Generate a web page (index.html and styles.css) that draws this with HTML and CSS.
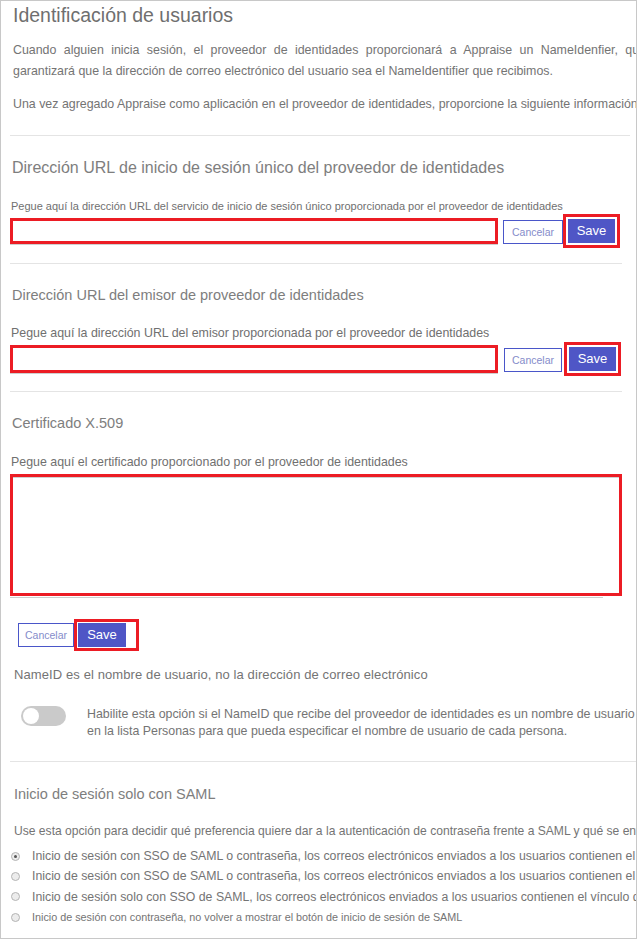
FILE: index.html
```html
<!DOCTYPE html>
<html lang="es">
<head>
<meta charset="utf-8">
<title>Identificación de usuarios</title>
<link rel="stylesheet" href="styles.css">
</head>
<body>
<div class="frame">
  <h1 class="title">Identificación de usuarios</h1>
  <p class="intro"><span class="just">Cuando alguien inicia sesión, el proveedor de identidades proporcionará a Appraise un NameIdenfier, que</span>garantizará que la dirección de correo electrónico del usuario sea el NameIdentifier que recibimos.</p>
  <p class="intro second">Una vez agregado Appraise como aplicación en el proveedor de identidades, proporcione la siguiente información</p>
  <div class="sep sep-wide"></div>

  <h2 class="heading h-first">Dirección URL de inicio de sesión único del proveedor de identidades</h2>
  <div class="label l-first">Pegue aquí la dirección URL del servicio de inicio de sesión único proporcionada por el proveedor de identidades</div>
  <div class="row r-first">
    <div class="input"></div>
    <button class="cancel">Cancelar</button>
    <span class="mark"><button class="save">Save</button></span>
  </div>
  <div class="sep s-second"></div>

  <h2 class="heading h-second">Dirección URL del emisor de proveedor de identidades</h2>
  <div class="label l-second">Pegue aquí la dirección URL del emisor proporcionada por el proveedor de identidades</div>
  <div class="row r-second">
    <div class="input"></div>
    <button class="cancel c-second">Cancelar</button>
    <span class="mark m-second"><button class="save">Save</button></span>
  </div>
  <div class="sep s-third"></div>

  <h2 class="heading h-third">Certificado X.509</h2>
  <div class="label l-third">Pegue aquí el certificado proporcionado por el proveedor de identidades</div>
  <div class="ta-wrap">
    <div class="textarea"></div>
  </div>
  <div class="row r-bottom">
    <button class="cancel c-bottom">Cancelar</button>
    <span class="mark m-bottom"><button class="save">Save</button></span>
  </div>

  <div class="nameid">NameID es el nombre de usuario, no la dirección de correo electrónico</div>
  <div class="toggle-row">
    <span class="toggle"><span class="knob"></span></span>
    <div class="toggle-text">Habilite esta opción si el NameID que recibe del proveedor de identidades es un nombre de usuario<br>en la lista Personas para que pueda especificar el nombre de usuario de cada persona.</div>
  </div>
  <div class="sep sep-full"></div>

  <h2 class="heading h-saml">Inicio de sesión solo con SAML</h2>
  <div class="use">Use esta opción para decidir qué preferencia quiere dar a la autenticación de contraseña frente a SAML y qué se envía en los correos electrónicos</div>
  <div class="radios">
    <div class="radio-row"><span class="radio checked"></span><span>Inicio de sesión con SSO de SAML o contraseña, los correos electrónicos enviados a los usuarios contienen el vínculo de inicio de sesión</span></div>
    <div class="radio-row"><span class="radio"></span><span>Inicio de sesión con SSO de SAML o contraseña, los correos electrónicos enviados a los usuarios contienen el vínculo de contraseña</span></div>
    <div class="radio-row"><span class="radio"></span><span>Inicio de sesión solo con SSO de SAML, los correos electrónicos enviados a los usuarios contienen el vínculo de SAML</span></div>
    <div class="radio-row small"><span class="radio"></span><span>Inicio de sesión con contraseña, no volver a mostrar el botón de inicio de sesión de SAML</span></div>
  </div>
</div>
</body>
</html>
```

FILE: styles.css
```css
html, body {
  margin: 0;
  padding: 0;
  background: #ffffff;
}

.frame {
  width: 637px;
  height: 939px;
  box-sizing: border-box;
  border: 1px solid #c8c8c8;
  overflow: hidden;
  padding: 2px 0 0 9px;
  font-family: "Liberation Sans", Arial, sans-serif;
  color: #747474;
  background: #ffffff;
}

.title {
  margin: 0;
  padding-left: 3px;
  font-size: 19.5px;
  line-height: 24px;
  font-weight: normal;
  color: #6f6f6f;
  white-space: nowrap;
}

.intro {
  margin: 13px 0 0 0;
  padding-left: 3px;
  width: 700px;
  font-size: 12.4px;
  line-height: 21px;
  color: #747474;
}

.just {
  display: block;
  width: 633px;
  text-align: justify;
  text-align-last: justify;
}

.intro.second {
  margin-top: 12px;
  white-space: nowrap;
}

.sep {
  height: 1px;
  background: #e4e4e4;
  width: 612px;
}

.sep-wide {
  width: 620px;
  margin-top: 20px;
}

.heading {
  margin: 0;
  padding-left: 2px;
  font-size: 14.5px;
  line-height: 20px;
  font-weight: normal;
  color: #7e7e7e;
  white-space: nowrap;
}

.h-first { margin-top: 22px; font-size: 16px; }
.h-second { margin-top: 21px; }
.h-third { margin-top: 21px; }
.h-saml { margin-top: 22px; padding-left: 4px; }

.label {
  padding-left: 1px;
  font-size: 11px;
  line-height: 14px;
  color: #707070;
  white-space: nowrap;
}

.l-first { margin-top: 21px; }
.l-second { margin-top: 21px; font-size: 12.4px; }
.l-third { margin-top: 22px; font-size: 12.4px; }

.row {
  display: flex;
  align-items: center;
  height: 34px;
}

.r-first { margin-top: 1px; }
.r-second { margin-top: 2px; }

.input {
  width: 488px;
  height: 26px;
  box-sizing: border-box;
  border: 3px solid #ec1c24;
  box-shadow: 0 1px 0 #cfcfcf;
  background: #ffffff;
}

.r-second .input {
  height: 28px;
}

.cancel {
  margin: 2px 0 0 5px;
  padding: 0;
  width: 60px;
  height: 24px;
  box-sizing: border-box;
  border: 1px solid #4a56c9;
  background: #ffffff;
  color: #858cca;
  font-family: "Liberation Sans", Arial, sans-serif;
  font-size: 10.5px;
  line-height: 22px;
}

.c-second { margin-left: 6px; width: 58px; }

.mark {
  display: flex;
  align-items: center;
  box-sizing: border-box;
  height: 34px;
  border: 3px solid #ec1c24;
  padding: 0 2px;
}

.m-second { margin-left: 2px; }

.save {
  margin: 0;
  padding: 0;
  width: 47px;
  height: 24px;
  border: none;
  background: #4f56c6;
  color: #ffffff;
  font-family: "Liberation Sans", Arial, sans-serif;
  font-size: 13px;
  line-height: 24px;
}

.s-second { margin-top: 15px; }
.s-third { margin-top: 15px; }

.ta-wrap {
  margin-top: 5px;
  width: 593px;
  border-bottom: 1px solid #cdcdcd;
  padding-bottom: 1px;
}

.textarea {
  width: 612px;
  height: 122px;
  box-sizing: border-box;
  border: 3px solid #ec1c24;
  box-shadow: inset 0 1px 0 #d0d0d0;
  background: #ffffff;
}

.r-bottom {
  margin-top: 21px;
  margin-left: 8px;
  height: 32px;
}

.c-bottom {
  margin: 0;
  width: 56px;
  height: 24px;
}

.m-bottom {
  height: 32px;
  padding: 0 10px 0 1px;
}

.m-bottom .save {
  width: 48px;
}

.nameid {
  margin-top: 16px;
  padding-left: 4px;
  font-size: 13px;
  line-height: 16px;
  letter-spacing: 0.1px;
  color: #747474;
  white-space: nowrap;
}

.toggle-row {
  margin-top: 23px;
  display: flex;
  align-items: flex-start;
  padding-left: 11px;
}

.toggle {
  display: flex;
  align-items: center;
  margin-top: 0;
  width: 45px;
  height: 20px;
  border-radius: 10px;
  background: #cacaca;
  padding-left: 2px;
  box-sizing: border-box;
}

.knob {
  width: 16px;
  height: 16px;
  border-radius: 50%;
  background: #ffffff;
}

.toggle-text {
  margin-left: 21px;
  font-size: 12.4px;
  line-height: 17px;
  color: #747474;
  white-space: nowrap;
}

.sep-full {
  margin-top: 21px;
  width: 640px;
}

.use {
  margin-top: 19px;
  padding-left: 4px;
  font-size: 12.1px;
  line-height: 16px;
  color: #747474;
  white-space: nowrap;
}

.radios {
  margin-top: 7px;
}

.radio-row {
  display: flex;
  align-items: center;
  height: 20.3px;
  font-size: 12.3px;
  color: #747474;
  white-space: nowrap;
}

.radio-row.small {
  font-size: 10.8px;
}

.radio {
  flex: none;
  width: 9px;
  height: 9px;
  box-sizing: border-box;
  border: 1px solid #b4b4b4;
  border-radius: 50%;
  background: #ececec;
  margin: 0 12px 0 1px;
  display: flex;
  align-items: center;
  justify-content: center;
}

.radio.checked::after {
  content: "";
  width: 3px;
  height: 3px;
  border-radius: 50%;
  background: #555555;
}
```
